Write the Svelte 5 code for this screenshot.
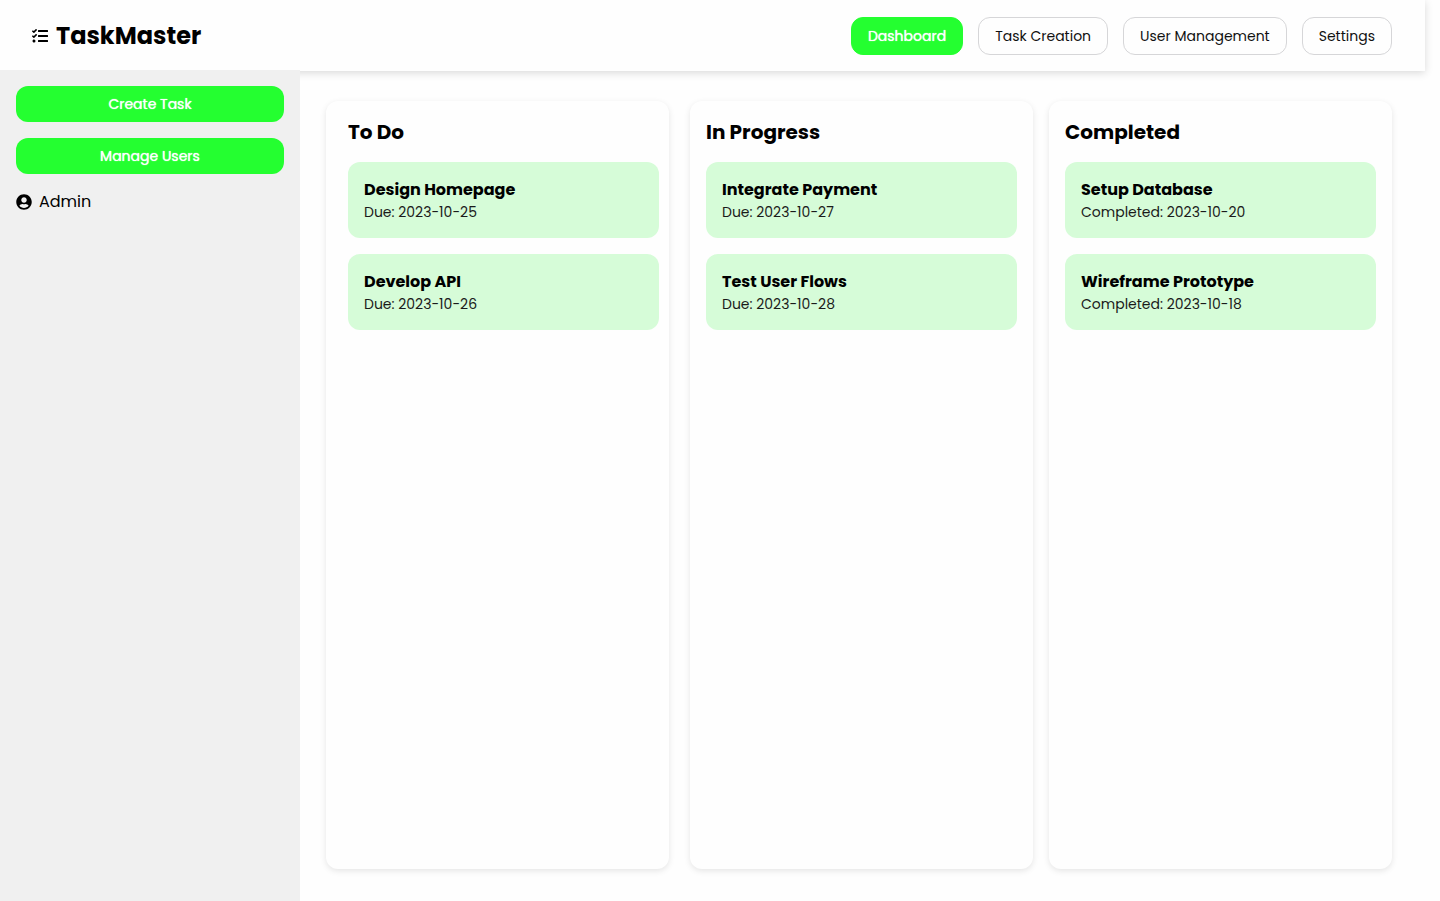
<script>
  let current = $state('Dashboard');

  const pages = ['Dashboard', 'Task Creation', 'User Management', 'Settings'];

  const columns = [
    {
      name: 'To Do',
      tasks: [
        { title: 'Design Homepage', note: 'Due: 2023-10-25' },
        { title: 'Develop API', note: 'Due: 2023-10-26' }
      ]
    },
    {
      name: 'In Progress',
      tasks: [
        { title: 'Integrate Payment', note: 'Due: 2023-10-27' },
        { title: 'Test User Flows', note: 'Due: 2023-10-28' }
      ]
    },
    {
      name: 'Completed',
      tasks: [
        { title: 'Setup Database', note: 'Completed: 2023-10-20' },
        { title: 'Wireframe Prototype', note: 'Completed: 2023-10-18' }
      ]
    }
  ];
</script>

<div class="app">
  <header>
    <div class="brand">
      <svg viewBox="0 0 512 512" aria-hidden="true">
        <path d="M139.61 35.5a12 12 0 0 0-17 0L58.93 98.81l-22.7-22.12a12 12 0 0 0-17 0L3.53 92.41a12 12 0 0 0 0 17l47.59 47.4a12.78 12.78 0 0 0 17.61 0l15.59-15.62L156.52 69a12.09 12.09 0 0 0 .09-17zm0 159.19a12 12 0 0 0-17 0l-63.68 63.72-22.7-22.1a12 12 0 0 0-17 0L3.53 252a12 12 0 0 0 0 17L51 316.5a12.77 12.77 0 0 0 17.6 0l15.7-15.69 72.2-72.22a12 12 0 0 0 .09-16.9zM64 368c-26.49 0-48.59 21.5-48.59 48S37.53 464 64 464a48 48 0 0 0 0-96zm432 16H208a16 16 0 0 0-16 16v32a16 16 0 0 0 16 16h288a16 16 0 0 0 16-16v-32a16 16 0 0 0-16-16zm0-320H208a16 16 0 0 0-16 16v32a16 16 0 0 0 16 16h288a16 16 0 0 0 16-16V80a16 16 0 0 0-16-16zm0 160H208a16 16 0 0 0-16 16v32a16 16 0 0 0 16 16h288a16 16 0 0 0 16-16v-32a16 16 0 0 0-16-16z" />
      </svg>
      <h1>TaskMaster</h1>
    </div>
    <nav>
      {#each pages as page}
        <button type="button" class:active={page === current} onclick={() => (current = page)}>{page}</button>
      {/each}
    </nav>
  </header>

  <div class="body">
    <aside>
      <button type="button">Create Task</button>
      <button type="button">Manage Users</button>
      <div class="user">
        <svg viewBox="0 0 496 512" aria-hidden="true">
          <path d="M248 8C111 8 0 119 0 256s111 248 248 248 248-111 248-248S385 8 248 8zm0 96c48.6 0 88 39.4 88 88s-39.4 88-88 88-88-39.4-88-88 39.4-88 88-88zm0 344c-58.7 0-111.3-26.6-146.5-68.2 18.8-35.4 55.6-59.8 98.5-59.8 2.4 0 4.8.4 7.1 1.1 13 4.2 26.6 6.9 40.9 6.9 14.3 0 28-2.7 40.9-6.9 2.3-.7 4.7-1.1 7.1-1.1 42.9 0 79.7 24.4 98.5 59.8C359.3 421.4 306.7 448 248 448z" />
        </svg>
        <span>Admin</span>
      </div>
    </aside>

    <main>
      {#each columns as column}
        <section>
          <h2>{column.name}</h2>
          {#each column.tasks as task}
            <article>
              <h3>{task.title}</h3>
              <p>{task.note}</p>
            </article>
          {/each}
        </section>
      {/each}
    </main>
  </div>
</div>

<style>
  :global(body) {
    margin: 0;
    background: #fefefe;
  }

  .app {
    display: flex;
    flex-direction: column;
    min-height: 100vh;
    color: #000;
    font-family: Poppins, Inter, sans-serif;
    font-size: 16px;
  }

  h1,
  h2,
  h3,
  p {
    margin: 0;
  }

  button {
    font: inherit;
    font-size: 14px;
    line-height: 20px;
    border-radius: 12px;
    cursor: pointer;
  }

  svg {
    width: 16px;
    height: 16px;
    fill: currentColor;
  }

  header {
    display: flex;
    align-items: center;
    justify-content: space-between;
    box-sizing: border-box;
    min-height: 71px;
    margin-right: 15px;
    padding: 0 33px 0 32px;
    background: #fefefe;
    box-shadow: 0 2px 8px rgba(0, 0, 0, 0.15);
  }

  .brand {
    display: flex;
    align-items: center;
    gap: 8px;
  }

  h1 {
    font-size: 24px;
    line-height: 36px;
    font-weight: 700;
  }

  nav {
    display: flex;
    gap: 15px;
  }

  nav button {
    padding: 8px 16px;
    border: 1px solid #d6d6d8;
    background: #fefefe;
    color: #111;
  }

  nav .active {
    border-color: #24ff30;
    background: #24ff30;
    color: #fff;
    text-shadow: 0 0 1px #fff;
  }

  .body {
    display: flex;
    flex: 1;
    margin-top: -1px;
  }

  aside {
    position: relative;
    display: flex;
    flex-direction: column;
    gap: 16px;
    box-sizing: border-box;
    width: 300px;
    padding: 16px;
    background: #f0f0f0;
  }

  aside button {
    padding: 8px 16px;
    border: 0;
    background: #24ff30;
    color: #fff;
    text-shadow: 0 0 1px #fff;
  }

  .user {
    display: flex;
    align-items: center;
    gap: 7px;
    line-height: 24px;
  }

  main {
    display: flex;
    flex: 1;
    gap: 16px;
    padding: 31px 48px 32px 26px;
  }

  section {
    flex: 1;
    padding: 16px;
    border-radius: 12px;
    background: #fefefe;
    box-shadow: 0 2px 6px rgba(0, 0, 0, 0.1);
  }

  section:first-child {
    margin-right: 5px;
    padding: 16px 10px 16px 22px;
  }

  h2 {
    margin-bottom: 15px;
    font-size: 20px;
    line-height: 30px;
    font-weight: 700;
  }

  article {
    padding: 16px;
    border-radius: 12px;
    background: #d6fcd8;
  }

  article + article {
    margin-top: 16px;
  }

  h3 {
    font-size: 16px;
    line-height: 24px;
    font-weight: 700;
  }

  p {
    font-size: 14px;
    line-height: 20px;
    color: #1a1a1a;
  }
</style>
